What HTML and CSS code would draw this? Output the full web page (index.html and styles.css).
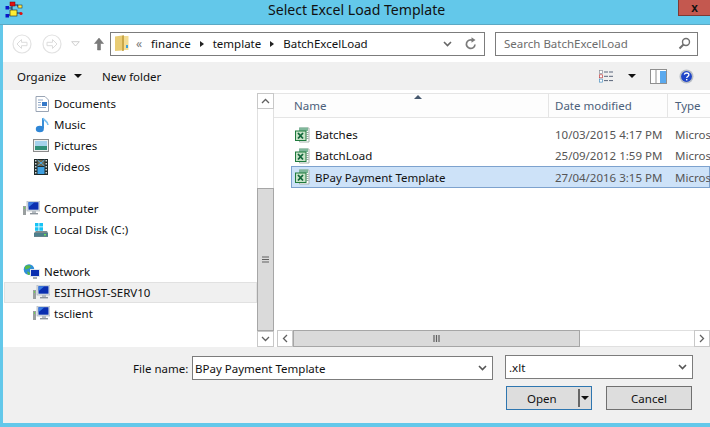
FILE: index.html
```html
<!DOCTYPE html>
<html lang="en">
<head>
<meta charset="utf-8">
<title>Select Excel Load Template</title>
<link rel="stylesheet" href="styles.css">
</head>
<body>
<svg class="defs" width="0" height="0" aria-hidden="true">
  <defs>
    <symbol id="pc" viewBox="0 0 17 16">
      <rect x="0" y="5" width="3" height="9" fill="#9a9f9f"/>
      <rect x="1" y="6" width="1" height="2" fill="#6fd05a"/>
      <rect x="4" y="0" width="13" height="10" fill="#dfe6ec" stroke="#9aa3aa" stroke-width=".6"/>
      <rect x="5.5" y="1.2" width="10" height="7.5" fill="#0a2fb0"/>
      <path d="M5.5 1.2h6l-6 5z" fill="#3a7be0"/>
      <path d="M9 10h4v2h-4z" fill="#b4bbc1"/>
      <path d="M7 12h8v1.4H7z" fill="#8c949b"/>
    </symbol>
    <symbol id="xl" viewBox="0 0 16 16">
      <path d="M4.500 1h9.500v14H4.500z" fill="#fff" stroke="#a7b4ad"/>
      <path d="M4 .5h9v3.500H4z" fill="#7fb79a"/>
      <path d="M11.500 5h2v1h-2zm0 2h2v1h-2zm0 2h2v1h-2zm0 2h2v1h-2z" fill="#9aa5a0"/>
      <rect x=".5" y="4" width="10.500" height="9.500" fill="#c9e4c9" stroke="#1f7a3d"/>
      <path d="M3 6l5 5.500M8 6l-5 5.500" stroke="#12663a" stroke-width="1.800" fill="none"/>
    </symbol>
  </defs>
</svg>
<div class="window">
  <header class="titlebar">
    <svg class="appicon" width="18" height="18" viewBox="0 0 18 18">
      <path d="M7 4H13V6M7 4V14H3M3 7H7M7 12H16" stroke="#1b2a55" fill="none"/>
      <rect x="5" y="1" width="5" height="4" fill="#e01010" stroke="#7a0000" stroke-width=".5"/>
      <rect x="13" y="4" width="4" height="3" fill="#ffe94a" stroke="#222" stroke-width=".5"/>
      <rect x="0.500" y="5" width="3.500" height="3.500" fill="#0a16c8"/>
      <rect x="0.500" y="13" width="3.500" height="3.500" fill="#0a16c8"/>
      <rect x="5" y="9" width="7" height="6" fill="#ffee33" stroke="#222" stroke-width=".6"/>
      <circle cx="16" cy="12.500" r="1.600" fill="#e01010"/>
    </svg>
    <h1 class="title">Select Excel Load Template</h1>
    <button class="close">x</button>
  </header>

  <div class="content">
    <nav class="navbar">
      <svg class="navbtn" width="20" height="20" viewBox="0 0 20 20"><circle cx="10" cy="10" r="9" fill="#fff" stroke="#e2e2e2" stroke-width="1.200"/><path d="M15 8.300H9.500V5.500L5 10l4.500 4.500v-2.800H15z" fill="#fff" stroke="#dcdcdc"/></svg>
      <svg class="navbtn fwd" width="20" height="20" viewBox="0 0 20 20"><circle cx="10" cy="10" r="9" fill="#fff" stroke="#e2e2e2" stroke-width="1.200"/><path d="M5 8.300h5.500V5.500L15 10l-4.500 4.500v-2.800H5z" fill="#fff" stroke="#dcdcdc"/></svg>
      <svg class="navdrop" width="9" height="6" viewBox="0 0 9 6"><path d="M.7.700h7.600L4.500 5z" fill="#fff" stroke="#cfcfcf"/></svg>
      <svg class="navup" width="10" height="14" viewBox="0 0 10 14"><path d="M5 1L.5 6.500H3.500V13h3V6.500h3z" fill="#7a7a7a" stroke="#6e6e6e" stroke-width=".5"/></svg>
      <div class="address">
        <svg class="folder" width="14" height="17" viewBox="0 0 14 17"><path d="M0 1.500L7 .5V15.500L0 16z" fill="#e9cc74"/><path d="M7 1h6.500v14H7z" fill="#f3dd94"/><path d="M7 .5l2-.2v15.400l-2 .3z" fill="#c9a74a"/><rect x="11" y="10" width="2" height="3" fill="#3f9fd8"/></svg>
        <span class="chev">&laquo;</span>
        <span class="crumb">finance</span><i class="sep"></i>
        <span class="crumb">template</span><i class="sep"></i>
        <span class="crumb last">BatchExcelLoad</span>
        <svg class="addrcaret" width="9" height="6" viewBox="0 0 9 6"><path d="M1 1l3.500 3.500L8 1" fill="none" stroke="#666" stroke-width="1.600"/></svg>
        <svg class="refresh" width="12" height="13" viewBox="0 0 12 13"><path d="M10 7.500A4.300 4.300 0 1 1 7.500 3.200" fill="none" stroke="#7b7b7b" stroke-width="1.700"/><path d="M6.500 .3v5.400L10.500 3z" fill="#7b7b7b"/></svg>
      </div>
      <div class="search">
        <span class="searchtext">Search BatchExcelLoad</span>
        <svg width="13" height="13" viewBox="0 0 13 13"><circle cx="8" cy="5" r="3.500" fill="#fff" stroke="#6f6f6f" stroke-width="1.400"/><path d="M5.500 7.500L1.500 11.500" stroke="#6f6f6f" stroke-width="2"/></svg>
      </div>
    </nav>

    <div class="toolbar">
      <span class="tool">Organize</span>
      <i class="caret organize-caret"></i>
      <span class="tool newfolder">New folder</span>
      <div class="spacer"></div>
      <svg class="views" width="16" height="13" viewBox="0 0 16 13"><rect x=".5" y=".5" width="3" height="3" fill="#fff" stroke="#8a8f99" stroke-width=".7"/><rect x=".5" y="4.800" width="3" height="3" fill="#fff" stroke="#c04040" stroke-width=".7"/><rect x=".5" y="9.100" width="3" height="3" fill="#fff" stroke="#4a90c0" stroke-width=".7"/><path d="M5 2h10M5 6.300h10M5 10.600h10" stroke="#59657a" stroke-dasharray="4 1"/></svg>
      <i class="caret views-caret"></i>
      <svg class="pane" width="17" height="15" viewBox="0 0 17 15"><rect x=".5" y=".5" width="16" height="14" fill="#fff" stroke="#8f8f8f"/><path d="M6 1v13" stroke="#8f8f8f"/><rect x="10" y="2" width="6" height="12" fill="#5aa9ee"/></svg>
      <svg class="help" width="15" height="15" viewBox="0 0 15 15"><circle cx="7.500" cy="7.500" r="7" fill="#b8bdc4"/><circle cx="7.500" cy="7.500" r="5.400" fill="#1f45c8"/><path d="M5.300 5.700c.4-2.300 4.600-2.300 4.600.1 0 1.700-2.200 1.700-2.200 3.200" fill="none" stroke="#fff" stroke-width="1.300"/><rect x="7" y="10" width="1.400" height="1.400" fill="#fff"/></svg>
    </div>

    <main class="panes">
      <aside class="tree">
        <div class="row indent narrow"><svg width="14" height="16" viewBox="0 0 14 16"><path d="M1 .5h9l3.500 3.500v11.500H1z" fill="#fff" stroke="#9aa5b5"/><path d="M3 4h5M3 6.500h3M3 9h3M3 11.500h8" stroke="#8fa8c8"/><rect x="7" y="6" width="5" height="4" fill="#3478c8"/></svg><span>Documents</span></div>
        <div class="row indent narrow"><svg width="14" height="16" viewBox="0 0 14 16"><path d="M8 1v10.500" stroke="#3a8fd8" stroke-width="2"/><ellipse cx="4.800" cy="12" rx="4" ry="3.300" fill="#2f86d6"/><path d="M8 1c1 3 5 3 5 7" fill="none" stroke="#7cc0f0" stroke-width="1.600"/></svg><span>Music</span></div>
        <div class="row indent"><svg width="16" height="13" viewBox="0 0 16 13"><rect x=".5" y=".5" width="15" height="12" fill="#eef0f0" stroke="#8b8b8b"/><rect x="2" y="2" width="12" height="5" fill="#a5d2ec"/><rect x="2" y="7" width="12" height="4" fill="#2f8f78"/></svg><span>Pictures</span></div>
        <div class="row indent mid"><svg width="14" height="16" viewBox="0 0 14 16"><rect width="14" height="16" fill="#1f2a2a"/><path d="M1 1h1.500v1.500H1zm0 3h1.500v1.500H1zm0 3h1.500v1.500H1zm0 3h1.500v1.500H1zm0 3h1.500v1.500H1zM11.500 1H13v1.500h-1.500zm0 3H13v1.500h-1.500zm0 3H13v1.500h-1.500zm0 3H13v1.500h-1.500zm0 3H13v1.500h-1.500z" fill="#cfd8d8"/><rect x="3.500" y="1" width="7" height="6" fill="#6f6a50"/><rect x="3.500" y="8" width="7" height="7" fill="#3f9fe0"/><path d="M3.500 1l7 6M3.500 7l7-6" stroke="#4aa8e8"/></svg><span>Videos</span></div>
        <div class="row group"><svg width="17" height="16"><use href="#pc"/></svg><span>Computer</span></div>
        <div class="row indent"><svg width="16" height="16" viewBox="0 0 16 16"><path d="M2 1h3.500v3.500H2zm4.300 0H10v3.500H6.300zM2 5.300h3.500v3.500H2zm4.300 0H10v3.500H6.300z" fill="#18c3f5"/><path d="M1 11l2-2h11l1 2v4H1z" fill="#7c8a8e"/><rect x="1" y="11" width="14" height="3.500" fill="#4e7f8c"/><rect x="11" y="12" width="2" height="1.500" fill="#6ee05a"/></svg><span>Local Disk (C:)</span></div>
        <div class="row group"><svg width="17" height="16" viewBox="0 0 17 16"><circle cx="6" cy="5.500" r="5.300" fill="#2f8fd8"/><path d="M2 2.500c3-2 5-1 6 0-1 2-4 3-6 3zm2 5c2 0 3 1 3 3l-2 .5z" fill="#58b848"/><rect x="7" y="5" width="10" height="8" fill="#dfe6ec"/><rect x="8" y="6" width="8" height="6" fill="#0a2fb0"/><path d="M10 13h4v2h-4z" fill="#a5adb3"/></svg><span>Network</span></div>
        <div class="row indent active"><svg width="17" height="16"><use href="#pc"/></svg><span>ESITHOST-SERV10</span></div>
        <div class="row indent"><svg width="17" height="16"><use href="#pc"/></svg><span>tsclient</span></div>
      </aside>

      <div class="vscroll">
        <div class="sbtn"><svg width="9" height="6" viewBox="0 0 9 6"><path d="M1 5l3.500-3.500L8 5" fill="none" stroke="#606060" stroke-width="1.300"/></svg></div>
        <div class="vtrack"></div>
        <div class="vthumb"><svg width="7" height="7" viewBox="0 0 7 7"><path d="M0 1h7M0 3.500h7M0 6h7" stroke="#606060" stroke-width="1.200"/></svg></div>
        <div class="sbtn"><svg width="9" height="6" viewBox="0 0 9 6"><path d="M1 1l3.500 3.500L8 1" fill="none" stroke="#606060" stroke-width="1.300"/></svg></div>
      </div>

      <section class="files">
        <div class="list-head">
          <div class="col cname">Name<i class="sort"></i></div>
          <div class="col cdate">Date modified</div>
          <div class="col ctype">Type</div>
        </div>
        <div class="list">
          <div class="file"><svg width="16" height="16"><use href="#xl"/></svg><span class="fname">Batches</span><span class="fdate">10/03/2015 4:17 PM</span><span class="ftype">Micros</span></div>
          <div class="file"><svg width="16" height="16"><use href="#xl"/></svg><span class="fname">BatchLoad</span><span class="fdate">25/09/2012 1:59 PM</span><span class="ftype">Micros</span></div>
          <div class="file selected"><svg width="16" height="16"><use href="#xl"/></svg><span class="fname">BPay Payment Template</span><span class="fdate">27/04/2016 3:15 PM</span><span class="ftype">Micros</span></div>
        </div>
        <div class="hscroll">
          <div class="hbtn"><svg width="6" height="9" viewBox="0 0 6 9"><path d="M5 1L1.500 4.500 5 8" fill="none" stroke="#606060" stroke-width="1.300"/></svg></div>
          <div class="hthumb"><svg width="7" height="7" viewBox="0 0 7 7"><path d="M1 0v7M3.500 0v7M6 0v7" stroke="#606060" stroke-width="1.200"/></svg></div>
          <div class="htrack"></div>
          <div class="hbtn"><svg width="6" height="9" viewBox="0 0 6 9"><path d="M1 1l3.500 3.500L1 8" fill="none" stroke="#606060" stroke-width="1.300"/></svg></div>
        </div>
      </section>
    </main>

    <footer class="footer">
      <div class="namerow">
        <label class="namelabel">File name:</label>
        <div class="combo namebox"><span>BPay Payment Template</span><svg width="9" height="6" viewBox="0 0 9 6"><path d="M1 1l3.500 3.500L8 1" fill="none" stroke="#555" stroke-width="1.600"/></svg></div>
        <div class="combo typebox"><span>.xlt</span><svg width="9" height="6" viewBox="0 0 9 6"><path d="M1 1l3.500 3.500L8 1" fill="none" stroke="#555" stroke-width="1.600"/></svg></div>
      </div>
      <div class="btnrow">
        <button class="btn open"><span class="opentext">Open</span><i class="opensep"></i><i class="caret opencaret"></i></button>
        <button class="btn cancel">Cancel</button>
      </div>
    </footer>
  </div>
</div>
</body>
</html>
```

FILE: styles.css
```css
* { box-sizing: border-box; }
html, body { margin: 0; padding: 0; }
body {
  width: 710px;
  height: 427px;
  overflow: hidden;
  font-family: "Noto Sans", "Open Sans", sans-serif;
  font-size: 11.5px;
  color: #000;
}
svg { flex: none; }
.defs { display: block; height: 0; }
.window {
  width: 710px;
  height: 427px;
  display: flex;
  flex-direction: column;
  background: #63c8ea;
  padding: 0 0 4px 3px;
}
.titlebar {
  height: 25px;
  flex: none;
  margin-left: -3px;
  display: flex;
  align-items: flex-start;
  position: relative;
  border-bottom: 1px solid #5ba9c4;
}
.appicon { margin: 1px 0 0 5px; }
.title {
  position: absolute;
  left: 268px;
  top: 0;
  margin: 0;
  font-size: 14.100px;
  line-height: 20px;
  font-weight: 400;
  color: #111;
  white-space: nowrap;
}
.close {
  position: absolute;
  right: 0;
  top: 0;
  width: 32px;
  height: 16px;
  padding: 0;
  border: 1px solid #7d3a34;
  border-top: 0;
  border-right: 0;
  background: #c4584f;
  font: 700 12px/14px "Liberation Sans", sans-serif;
  color: #111;
  display: flex;
  align-items: center;
  justify-content: center;
}
.content {
  flex: 1;
  display: flex;
  flex-direction: column;
  min-height: 0;
  background: #f0f0f0;
}

/* navigation */
.navbar {
  height: 37px;
  flex: none;
  background: #fff;
  display: flex;
  align-items: center;
  padding: 0 12px 0 9px;
}
.navbtn { margin-left: 0; }
.fwd { margin-left: 10px; }
.navdrop { margin-left: 9px; }
.navup { margin-left: 14px; }
.address, .search {
  height: 24px;
  border: 1px solid #7c7c7c;
  display: flex;
  align-items: center;
  background: #fff;
}
.address {
  width: 375px;
  margin-left: 6px;
  padding: 0 7px 0 4px;
}
.folder { flex: none; }
.chev { margin-left: 7px; color: #777; font-size: 12px; line-height: 1; }
.crumb { margin-left: 6px; color: #111; }
.chev + .crumb { margin-left: 9px; }
.sep {
  margin-left: 9px;
  margin-right: 3px;
  border-left: 4px solid #222;
  border-top: 3.500px solid transparent;
  border-bottom: 3.500px solid transparent;
}
.last { flex: 1; }
.addrcaret { margin-right: 13px; }
.search {
  width: 203px;
  margin-left: 10px;
  padding: 0 6px 0 8px;
  justify-content: space-between;
}
.searchtext { color: #6d6d6d; }

/* toolbar */
.toolbar {
  height: 28px;
  flex: none;
  display: flex;
  align-items: center;
  padding-left: 14px;
  padding-right: 16px;
}
.tool { color: #111; }
.caret {
  display: block;
  border-top: 4px solid #111;
  border-left: 4px solid transparent;
  border-right: 4px solid transparent;
}
.organize-caret { margin-left: 8px; }
.newfolder { margin-left: 20px; }
.spacer { flex: 1; }
.views-caret { margin-left: 13px; }
.pane { margin-left: 14px; }
.help { margin-left: 12px; }

/* main */
.panes {
  height: 257px;
  flex: none;
  display: flex;
  background: #fff;
}
.tree {
  width: 254px;
  flex: none;
  padding-top: 3px;
}
.row {
  position: relative;
  height: 21px;
  display: flex;
  align-items: center;
  color: #111;
  padding-left: 20px;
}
.row span { position: absolute; left: 41px; }
.group { margin-top: 21px; }
.indent { padding-left: 30px; }
.indent span { left: 51px; }
.narrow { padding-left: 32px; }
.mid { padding-left: 31px; }
.active {
  background: #f0f0f0;
  border: 1px solid #e1e1e1;
  padding-left: 28px;
  margin-left: 1px;
}
.active span { left: 49px; }
.vscroll {
  width: 17px;
  flex: none;
  margin-top: 3px;
  display: flex;
  flex-direction: column;
}
.sbtn {
  height: 16px;
  flex: none;
  background: #fff;
  border: 1px solid #c8c8c8;
  display: flex;
  align-items: center;
  justify-content: center;
}
.vtrack {
  height: 79px;
  flex: none;
  background: #fff;
  border-left: 1px solid #e0e0e0;
  border-right: 1px solid #e0e0e0;
}
.vthumb {
  flex: 1;
  background: #dadada;
  border: 1px solid #a6a6a6;
  display: flex;
  align-items: center;
  justify-content: center;
}
.files {
  flex: 1;
  min-width: 0;
  display: flex;
  flex-direction: column;
  margin-top: 3px;
  padding-left: 3px;
}
.list-head {
  height: 25px;
  flex: none;
  display: flex;
  background: #fdfdfd;
  border-top: 1px solid #e5e5e5;
  border-bottom: 1px solid #e5e5e5;
  margin-left: -3px;
  color: #4c607a;
}
.col {
  display: flex;
  align-items: center;
  position: relative;
  padding-left: 6px;
  border-right: 1px solid #e5e5e5;
}
.cname { width: 275px; padding-left: 20px; }
.cdate { width: 119px; }
.ctype { flex: 1; border-right: 0; padding-left: 7px; }
.sort {
  position: absolute;
  left: 140px;
  top: 1px;
  border-bottom: 4px solid #46596e;
  border-left: 4px solid transparent;
  border-right: 4px solid transparent;
}
.list {
  flex: 1;
  padding-top: 6px;
  padding-left: 14px;
  overflow: hidden;
}
.file {
  height: 21px;
  display: flex;
  align-items: center;
  padding-left: 4px;
  white-space: nowrap;
  color: #111;
}
.fname { width: 240px; margin-left: 4px; flex: none; }
.fdate { width: 120px; flex: none; color: #555; }
.ftype { color: #555; }
.selected {
  height: 22px;
  background: #cde2f8;
  border: 1px solid #7da2ce;
  padding-left: 3px;
}
.hscroll {
  height: 17px;
  flex: none;
  display: flex;
}
.hbtn {
  width: 16px;
  flex: none;
  background: #fff;
  border: 1px solid #c8c8c8;
  display: flex;
  align-items: center;
  justify-content: center;
}
.hthumb {
  width: 287px;
  flex: none;
  background: #dadada;
  border: 1px solid #a6a6a6;
  display: flex;
  align-items: center;
  justify-content: center;
}
.htrack { flex: 1; border-top: 1px solid #e0e0e0; border-bottom: 1px solid #e0e0e0; }

/* footer */
.footer {
  flex: 1;
  display: flex;
  flex-direction: column;
  padding: 9px 17px 0 0;
}
.namerow {
  height: 24px;
  display: flex;
  align-items: center;
}
.namelabel { margin-left: 130px; width: 59px; flex: none; color: #111; }
.combo {
  height: 24px;
  background: #fff;
  border: 1px solid #7c7c7c;
  display: flex;
  align-items: center;
  justify-content: space-between;
  padding: 0 5px 0 3px;
  color: #111;
}
.namebox { width: 301px; padding-left: 2px; }
.typebox { width: 188px; margin-left: 12px; margin-top: -2px; }
.btnrow {
  display: flex;
  justify-content: flex-end;
  gap: 14px;
  margin-top: 6px;
  padding-right: 1px;
}
.btn {
  width: 86px;
  height: 24px;
  padding: 0;
  background: #ddd;
  border: 1px solid #707070;
  font: inherit;
  color: #111;
}
.open {
  border-color: #2e76b0;
  display: flex;
  align-items: center;
  padding-left: 20px;
}
.opentext { width: 51px; text-align: left; }
.opensep { display: block; width: 2px; height: 18px; background: #666; }
.opencaret { margin-left: 1px; }
```
